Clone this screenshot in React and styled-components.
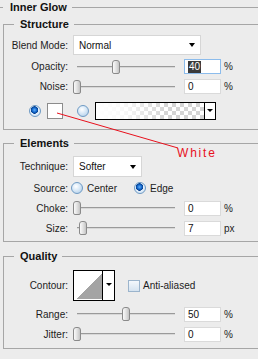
import React from 'react';
import styled, { createGlobalStyle } from 'styled-components';

const GlobalStyle = createGlobalStyle`
  html, body {
    margin: 0;
    padding: 0;
    background: #ececec;
  }
  body {
    font-family: "Liberation Sans", Arial, sans-serif;
    font-size: 10px;
    color: #1c1c1c;
    overflow: hidden;
  }
`;

const Page = styled.div`
  position: relative;
  width: 258px;
  height: 359px;
  overflow: hidden;
`;

const OuterGroup = styled.fieldset`
  margin: 0;
  padding: 0;
  border: none;
  border-top: 1px solid #a6a6a6;
  min-width: 0;
`;

const OuterLegend = styled.legend`
  margin-left: 3px;
  padding: 0 5px 0 7px;
  font-size: 11px;
  font-weight: bold;
  line-height: 14px;
  color: #111;
`;

const Group = styled.fieldset`
  margin: ${(p) => p.$top}px 0 0 3px;
  padding: ${(p) => p.$pad};
  border: 1px solid #a6a6a6;
  border-right: none;
  min-width: 0;
`;

const Legend = styled.legend`
  margin-left: 10px;
  padding: 0 5px 0 6px;
  font-size: 11px;
  font-weight: bold;
  line-height: 14px;
  color: #111;
`;

const Row = styled.div`
  display: flex;
  align-items: center;
  height: ${(p) => p.$h}px;
`;

const Label = styled.div`
  width: 64px;
  text-align: right;
  flex: none;
  margin-right: ${(p) => (p.$gap != null ? p.$gap : 5)}px;
  white-space: nowrap;
`;

const Select = styled.div`
  position: relative;
  box-sizing: border-box;
  width: ${(p) => p.$w}px;
  height: ${(p) => p.$h}px;
  background: #fff;
  border: 1px solid #d6d6d6;
  display: flex;
  align-items: center;
  padding-left: 5px;
  font-size: 10px;
  color: #111;
  &::after {
    content: '';
    position: absolute;
    right: 5px;
    top: 50%;
    margin-top: -2px;
    border-left: 3.5px solid transparent;
    border-right: 3.5px solid transparent;
    border-top: 4px solid #000;
  }
`;

const SliderBox = styled.div`
  position: relative;
  width: 106px;
  height: 16px;
  flex: none;
`;

const Track = styled.div`
  position: absolute;
  left: 4px;
  right: 4px;
  top: 7px;
  height: 1px;
  background: #9a9a9a;
  border-bottom: 1px solid #d8d8d8;
`;

const Thumb = styled.div`
  position: absolute;
  top: 1px;
  width: 6px;
  height: 12px;
  margin-left: -4px;
  border: 1px solid #8a8a8a;
  border-radius: 3px 3px 2px 2px;
  background: linear-gradient(to right, #fafafa, #e2e2e2 50%, #c4c4c4);
`;

const NumField = styled.div`
  box-sizing: border-box;
  width: 37px;
  height: 15px;
  margin-left: 5px;
  background: #fff;
  border: 1px solid ${(p) => (p.$focus ? '#8cbcec' : '#dadada')};
  display: flex;
  align-items: center;
  padding-left: 3px;
  font-size: 10px;
  color: #111;
`;

const Selected = styled.span`
  background: #3a3a3a;
  color: #fff;
  padding: 0 1px;
  line-height: 12px;
`;

const Unit = styled.span`
  margin-left: 3px;
  font-size: 10px;
`;

const Radio = styled.span`
  box-sizing: border-box;
  display: inline-block;
  flex: none;
  width: 12px;
  height: 12px;
  border-radius: 50%;
  margin-left: ${(p) => p.$ml || 0}px;
  border: 1px solid #6e9ac4;
  background: ${(p) =>
    p.$on
      ? 'radial-gradient(circle at 45% 40%, #5fb0ff 0, #0d5fc2 2.5px, #0a3f8a 3.5px, #e4f0fb 4px, #c7dcf0 100%)'
      : 'radial-gradient(circle at 40% 35%, #ffffff 0, #dcebf8 40%, #a9c8e6 100%)'};
`;

const RadioText = styled.span`
  margin-left: 4px;
  margin-right: ${(p) => p.$mr || 0}px;
`;

const Swatch = styled.div`
  box-sizing: border-box;
  width: 16px;
  height: 16px;
  margin-left: 6px;
  background: #fff;
  border: 1px solid #8c8c8c;
`;

const GradientPicker = styled.div`
  box-sizing: border-box;
  display: flex;
  width: 121px;
  height: 18px;
  margin-left: 6px;
  border: 1px solid #000;
  background: #fff;
`;

const GradientFill = styled.div`
  flex: 1;
  background:
    linear-gradient(to right, #fff 0%, rgba(255, 255, 255, 0.85) 25%, rgba(255, 255, 255, 0) 65%),
    repeating-conic-gradient(#d4d4d4 0% 25%, #fff 0% 50%) 0 0 / 8px 8px;
`;

const DropButton = styled.div`
  position: relative;
  width: 10px;
  border-left: 1px solid #000;
  background: #fff;
  &::after {
    content: '';
    position: absolute;
    left: 2px;
    top: 6px;
    border-left: 3px solid transparent;
    border-right: 3px solid transparent;
    border-top: 3px solid #000;
  }
`;

const ContourBox = styled.div`
  box-sizing: border-box;
  display: flex;
  width: 42px;
  height: 31px;
  border: 1px solid #000;
  background: #fff;
`;

const ContourCurve = styled.div`
  flex: 1;
  margin: 2px 0 1px 3px;
  background: linear-gradient(to bottom right, #fff 50%, #a4a4a4 50%);
`;

const ContourDrop = styled(DropButton)`
  width: 11px;
  &::after {
    left: 3px;
    top: 12px;
  }
`;

const CheckBox = styled.span`
  box-sizing: border-box;
  display: inline-block;
  width: 12px;
  height: 12px;
  margin-left: 13px;
  border: 1px solid #9bb4cc;
  background: linear-gradient(to bottom, #f4f8fc, #d5e3f0);
`;

const CheckText = styled.span`
  margin-left: 3px;
`;

const Annotation = styled.svg`
  position: absolute;
  left: 0;
  top: 0;
  pointer-events: none;
`;

const Callout = styled.div`
  position: absolute;
  left: 177px;
  top: 146px;
  color: #e8101c;
  font-size: 12px;
  line-height: 14px;
  letter-spacing: 1.8px;
`;

function Slider({ pos }) {
  return (
    <SliderBox>
      <Track />
      <Thumb style={{ left: `${4 + pos * 0.98}px` }} />
    </SliderBox>
  );
}

function SliderRow({ h, label, pos, value, unit, focus }) {
  return (
    <Row $h={h}>
      <Label>{label}</Label>
      <Slider pos={pos} />
      <NumField $focus={focus}>{focus ? <Selected>{value}</Selected> : value}</NumField>
      <Unit>{unit}</Unit>
    </Row>
  );
}

export default function App() {
  return (
    <Page>
      <GlobalStyle />
      <OuterGroup>
        <OuterLegend>Inner Glow</OuterLegend>

        <Group $top={3} $pad="3px 0 6px 0">
          <Legend>Structure</Legend>
          <Row $h={22}>
            <Label>Blend Mode:</Label>
            <Select $w={128} $h={20}>Normal</Select>
          </Row>
          <SliderRow h={21} label="Opacity:" pos={40} value="40" unit="%" focus />
          <SliderRow h={19} label="Noise:" pos={0} value="0" unit="%" />
          <Row $h={24} style={{ marginTop: 3 }}>
            <Radio $on $ml={25} />
            <Swatch />
            <Radio $ml={14} />
            <GradientPicker>
              <GradientFill />
              <DropButton />
            </GradientPicker>
          </Row>
        </Group>

        <Group $top={6} $pad="5px 0 3px 0">
          <Legend>Elements</Legend>
          <Row $h={23}>
            <Label>Technique:</Label>
            <Select $w={69} $h={21}>Softer</Select>
          </Row>
          <Row $h={20}>
            <Label $gap={3}>Source:</Label>
            <Radio />
            <RadioText $mr={17}>Center</RadioText>
            <Radio $on />
            <RadioText>Edge</RadioText>
          </Row>
          <SliderRow h={20} label="Choke:" pos={0} value="0" unit="%" />
          <SliderRow h={20} label="Size:" pos={6.6} value="7" unit="px" />
        </Group>

        <Group $top={7} $pad="4px 0 4px 0">
          <Legend>Quality</Legend>
          <Row $h={37}>
            <Label>Contour:</Label>
            <ContourBox>
              <ContourCurve />
              <ContourDrop />
            </ContourBox>
            <CheckBox />
            <CheckText>Anti-aliased</CheckText>
          </Row>
          <SliderRow h={20} label="Range:" pos={50} value="50" unit="%" />
          <SliderRow h={20} label="Jitter:" pos={0} value="0" unit="%" />
        </Group>
      </OuterGroup>

      <Annotation width="258" height="359">
        <line x1="57" y1="113" x2="178" y2="148" stroke="#e8101c" strokeWidth="1" />
      </Annotation>
      <Callout>White</Callout>
    </Page>
  );
}
